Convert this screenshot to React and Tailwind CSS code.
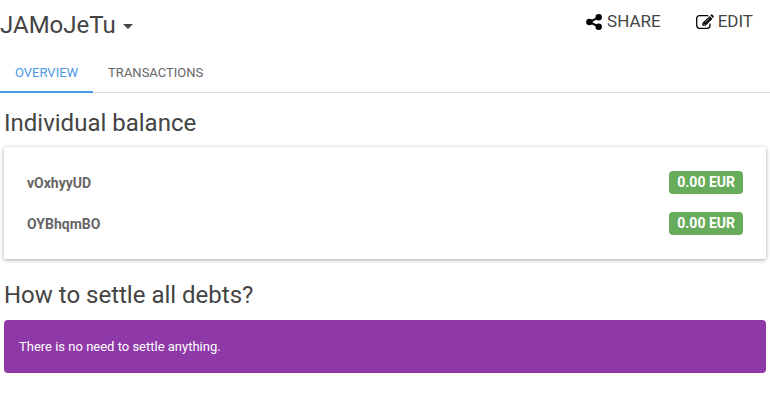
const balances = [
  { name: "vOxhyyUD", amount: "0.00 EUR" },
  { name: "OYBhqmBO", amount: "0.00 EUR" },
];

function ShareIcon() {
  return (
    <svg className="mt-[2px] h-4 w-4" viewBox="0 0 16 16" fill="#000" aria-hidden="true">
      <path d="M3.5 8 12.5 3.3M3.5 8l9 4.7" stroke="#000" strokeWidth="2" />
      <circle cx="3.4" cy="8" r="3.2" />
      <circle cx="12.7" cy="3.3" r="3.2" />
      <circle cx="12.7" cy="12.7" r="3.2" />
    </svg>
  );
}

function EditIcon() {
  return (
    <svg className="mt-[2px] h-4 w-[18px]" viewBox="0 0 18 16" fill="none" aria-hidden="true">
      <path
        d="M12.2 1.7H3.4A2.7 2.7 0 0 0 .7 4.4v7.2a2.7 2.7 0 0 0 2.7 2.7h7.9A2.7 2.7 0 0 0 14 11.6V9.6"
        stroke="#000"
        strokeWidth="1.3"
      />
      <path d="M13.6 2 16.4 4.8 9.5 11.8H6.3V9.1Z" fill="#000" />
      <path d="M14.3 1.3 15.1.6Q15.6.2 16.1.6L17.6 2.1Q18 2.7 17.6 3.2L17 4Z" fill="#000" />
      <path d="M9 8.4 13.8 3.7" stroke="#fff" strokeWidth=".6" />
      <path d="M7.3 9.6 8.6 10.9" stroke="#fff" strokeWidth=".8" />
    </svg>
  );
}

export default function App() {
  return (
    <main className="min-h-screen bg-white font-[Roboto,sans-serif] text-[#444]">
      <header className="flex items-start justify-between pr-[17px]">
        <h1>
          <button type="button" className="flex items-center gap-[7px] pt-[9px] pb-2 text-2xl leading-8">
            JAMoJeTu
            <span className="mt-[2px] border-x-[5px] border-t-[5px] border-x-transparent border-t-[#444]" />
          </button>
        </h1>
        <div className="flex gap-[35px] pt-2 text-[17px] leading-[26px]">
          <button type="button" className="flex items-center gap-[5px]">
            <ShareIcon />
            SHARE
          </button>
          <button type="button" className="flex items-center gap-1">
            <EditIcon />
            EDIT
          </button>
        </div>
      </header>
      <nav className="mt-1 flex border-b border-[#ddd] text-[13px] leading-5">
        <a href="#overview" className="-mb-px border-b-2 border-[#4a98e8] px-[15px] pt-[10px] pb-2 text-[#4a98e8]">
          OVERVIEW
        </a>
        <a href="#transactions" className="px-[15px] pt-[10px] pb-2 text-[#666]">
          TRANSACTIONS
        </a>
      </nav>
      <section className="px-1 pt-3">
        <h2 className="text-2xl leading-9">Individual balance</h2>
        <ul className="mt-[6px] rounded-xs px-[23px] py-[15px] shadow-[0_1px_4px_rgba(0,0,0,0.35)]">
          {balances.map((b) => (
            <li key={b.name} className="flex h-[41px] items-center justify-between text-sm font-bold text-[#666]">
              {b.name}
              <span className="rounded-sm bg-[#67ac5b] px-2 leading-[23px] text-white">{b.amount}</span>
            </li>
          ))}
        </ul>
      </section>
      <section className="px-1 pt-[18px]">
        <h2 className="text-2xl leading-9">How to settle all debts?</h2>
        <p className="mt-[7px] rounded-sm bg-[#8f38a8] p-[15px] text-[13px] leading-[23px] text-white">
          There is no need to settle anything.
        </p>
      </section>
    </main>
  );
}
